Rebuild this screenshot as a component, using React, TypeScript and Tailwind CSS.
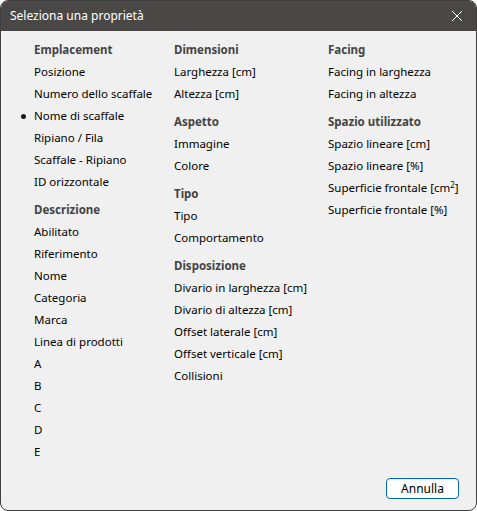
import React from "react";

type Group = { title: string; items: string[] };

const columns: Group[][] = [
  [
    {
      title: "Emplacement",
      items: ["Posizione", "Numero dello scaffale", "Nome di scaffale", "Ripiano / Fila", "Scaffale - Ripiano", "ID orizzontale"],
    },
    {
      title: "Descrizione",
      items: ["Abilitato", "Riferimento", "Nome", "Categoria", "Marca", "Linea di prodotti", "A", "B", "C", "D", "E"],
    },
  ],
  [
    { title: "Dimensioni", items: ["Larghezza [cm]", "Altezza [cm]"] },
    { title: "Aspetto", items: ["Immagine", "Colore"] },
    { title: "Tipo", items: ["Tipo", "Comportamento"] },
    {
      title: "Disposizione",
      items: ["Divario in larghezza [cm]", "Divario di altezza [cm]", "Offset laterale [cm]", "Offset verticale [cm]", "Collisioni"],
    },
  ],
  [
    { title: "Facing", items: ["Facing in larghezza", "Facing in altezza"] },
    {
      title: "Spazio utilizzato",
      items: ["Spazio lineare [cm]", "Spazio lineare [%]", "Superficie frontale [cm²]", "Superficie frontale [%]"],
    },
  ],
];

const selected = "Nome di scaffale";

function Item({ label }: { label: string }) {
  const sup = label.includes("²");
  return (
    <div className="relative flex h-[22px] items-center text-black">
      {label === selected && (
        <span className="absolute -left-[13px] top-[9px] h-[5px] w-[5px] rounded-full bg-[#1a1a1a]" />
      )}
      {sup ? (
        <span>
          Superficie frontale [cm<sup className="text-[8px]">2</sup>]
        </span>
      ) : (
        label
      )}
    </div>
  );
}

export default function App() {
  return (
    <div
      className="flex h-[511px] w-[477px] flex-col overflow-hidden rounded-[8px] border border-[#3f3f3f] bg-[#f0f0f0] text-[11.5px]"
      style={{ fontFamily: '"Segoe UI", "Noto Sans", "Open Sans", sans-serif' }}
    >
      <div className="flex h-[30px] shrink-0 items-center justify-between bg-[#4a4846] pl-[9px] pr-[13px] text-[12px] text-white">
        <span>Seleziona una proprietà</span>
        <svg width="12" height="12" viewBox="0 0 12 12" fill="none" stroke="#ffffff" strokeWidth="1">
          <path d="M1 1L11 11M11 1L1 11" />
        </svg>
      </div>

      <div className="flex flex-1 pl-[33px] pt-[8px]">
        {columns.map((col, ci) => (
          <div key={ci} className={ci === 0 ? "w-[140px]" : ci === 1 ? "w-[154px]" : "flex-1"}>
            {col.map((g, gi) => (
              <div key={g.title} className={gi > 0 ? "mt-[6px]" : ""}>
                <div className="flex h-[22px] items-center font-bold text-[#444444]">{g.title}</div>
                {g.items.map((it) => (
                  <Item key={it} label={it} />
                ))}
              </div>
            ))}
          </div>
        ))}
      </div>

      <div className="flex justify-end pb-[11px] pr-[17px]">
        <button
          type="button"
          className="h-[21px] w-[73px] rounded-[4px] border border-[#0067c0] bg-white text-[12px] text-black"
        >
          Annulla
        </button>
      </div>
    </div>
  );
}
